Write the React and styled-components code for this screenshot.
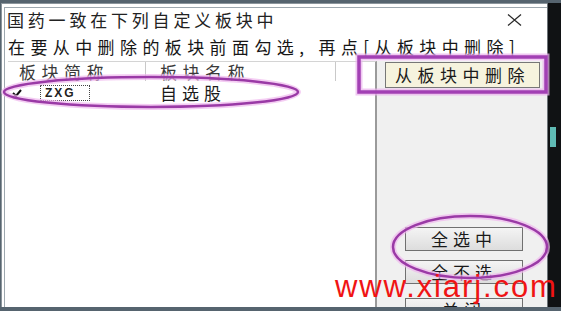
import styled, { createGlobalStyle } from "styled-components";

const GlobalStyle = createGlobalStyle`
  html, body {
    margin: 0;
    padding: 0;
    background: #56646f;
  }
`;

const cjk = `"Noto Sans CJK SC", "Noto Sans", sans-serif`;

const App = () => {
  return (
    <>
      <GlobalStyle />
      <Screen>
        <Main>
          <Dialog>
            <Inner>
              <TitleRow>
                <Title>国药一致在下列自定义板块中</Title>
                <Close aria-label="close">
                  <svg width="15" height="12" viewBox="0 0 15 12">
                    <path d="M1 0.5 L14 11.5 M14 0.5 L1 11.5" stroke="#2a2a2a" strokeWidth="1.3" fill="none" />
                  </svg>
                </Close>
              </TitleRow>
              <Hint>在要从中删除的板块前面勾选, 再点[从板块中删除]</Hint>
              <Content>
                <List>
                  <HeaderRow>
                    <HeaderCell $w={138} $pad={11}>板块简称</HeaderCell>
                    <HeaderCell $w={190} $pad={14}>板块名称</HeaderCell>
                    <HeaderCell $w={38} $pad={0} $last />
                  </HeaderRow>
                  <Row>
                    <CodeCell>
                      <Check>
                        <svg width="10" height="8" viewBox="0 0 10 8">
                          <path d="M1 4 L4 7 L9 1" stroke="#111" strokeWidth="2" fill="none" />
                        </svg>
                      </Check>
                      <Focus>ZXG</Focus>
                    </CodeCell>
                    <NameCell>自选股</NameCell>
                  </Row>
                </List>
                <Side>
                  <DeleteButton>从板块中删除</DeleteButton>
                  <ButtonGroup>
                    <Button>全选中</Button>
                    <Button>全不选</Button>
                    <Button $gap={14}>关闭</Button>
                  </ButtonGroup>
                </Side>
              </Content>
            </Inner>
          </Dialog>
          <DarkSide>
            <Teal />
          </DarkSide>
        </Main>

        <Marks width="561" height="311" viewBox="0 0 561 311">
          <g fill="none">
            <ellipse cx="151" cy="92" rx="147" ry="15" stroke="#f0b8ee" strokeWidth="6" opacity="0.7" />
            <ellipse cx="151" cy="92" rx="147" ry="15" stroke="#9a3aa6" strokeWidth="2.5" />
            <rect x="359" y="57" width="187" height="35" stroke="#eab0ec" strokeWidth="7" opacity="0.7" />
            <rect x="359" y="57" width="187" height="35" stroke="#a240b4" strokeWidth="3.5" />
            <ellipse cx="470" cy="247" rx="77" ry="31" stroke="#f0b8ee" strokeWidth="6" opacity="0.7" />
            <ellipse cx="470" cy="247" rx="77" ry="31" stroke="#9a3aa6" strokeWidth="2.5" />
          </g>
        </Marks>
        <Watermark>www.xiarj.com</Watermark>
      </Screen>
    </>
  );
};

export default App;

// Styled Components
const Screen = styled.div`
  position: relative;
  width: 561px;
  height: 311px;
  overflow: hidden;
  background: #56646f;
  padding: 3px 0 4px 1px;
  box-sizing: border-box;
`;

const Main = styled.div`
  display: flex;
  height: 100%;
`;

const Dialog = styled.div`
  width: 546px;
  background: #ffffff;
  border-left: 1px solid #8b959c;
  border-top: 1px solid #8b959c;
  padding: 3px 0 0 2px;
  box-sizing: border-box;
  display: flex;
`;

const Inner = styled.div`
  flex: 1;
  border-left: 1px solid #9ea8af;
  border-top: 1px solid #9ea8af;
  display: flex;
  flex-direction: column;
  min-width: 0;
`;

const TitleRow = styled.div`
  display: flex;
  align-items: center;
  height: 22px;
  padding-left: 2px;
`;

const Title = styled.div`
  font-family: ${cjk};
  font-size: 17px;
  letter-spacing: 3.8px;
  color: #222;
  white-space: nowrap;
`;

const Close = styled.div`
  margin-left: auto;
  margin-right: 25px;
  display: flex;
  padding-top: 2px;
`;

const Hint = styled.div`
  font-family: ${cjk};
  font-size: 17px;
  letter-spacing: 5.4px;
  color: #161616;
  height: 28px;
  line-height: 28px;
  margin-top: 3px;
  padding-left: 3px;
  white-space: nowrap;
`;

const Content = styled.div`
  flex: 1;
  display: flex;
  min-height: 0;
`;

const List = styled.div`
  width: 369px;
  margin-left: 3px;
  background: #ffffff;
  border-top: 1px solid #d4d4d4;
  border-right: 2px solid #9a9a9a;
  box-sizing: border-box;
`;

const HeaderRow = styled.div`
  display: flex;
  height: 19px;
`;

const HeaderCell = styled.div`
  width: ${(p) => p.$w}px;
  padding-left: ${(p) => p.$pad}px;
  box-sizing: border-box;
  border-right: ${(p) => (p.$last ? "none" : "1px solid #c9c9c9")};
  font-family: ${cjk};
  font-size: 17px;
  letter-spacing: 5.5px;
  line-height: 19px;
  color: #3a3a3a;
  white-space: nowrap;
`;

const Row = styled.div`
  display: flex;
  align-items: center;
  height: 21px;
  margin-top: 1px;
`;

const CodeCell = styled.div`
  width: 138px;
  display: flex;
  align-items: center;
  padding-left: 3px;
  box-sizing: border-box;
`;

const Check = styled.div`
  width: 11px;
  height: 11px;
  display: flex;
  align-items: center;
  justify-content: center;
`;

const Focus = styled.div`
  margin-left: 18px;
  width: 50px;
  height: 16px;
  border: 1px dotted #444;
  box-sizing: border-box;
  padding-left: 4px;
  font-family: "Liberation Sans", Arial, sans-serif;
  font-weight: bold;
  font-size: 12px;
  letter-spacing: 2px;
  line-height: 14px;
  color: #222;
`;

const NameCell = styled.div`
  padding-left: 14px;
  font-family: ${cjk};
  font-size: 17px;
  letter-spacing: 5px;
  color: #1a1a1a;
`;

const Side = styled.div`
  flex: 1;
  background: #f0f0f0;
  display: flex;
  flex-direction: column;
  padding-top: 1px;
  overflow: hidden;
`;

const DeleteButton = styled.div`
  margin-left: 8px;
  width: 155px;
  height: 26px;
  box-sizing: border-box;
  border: 1px solid #777;
  background: #f6f3de;
  font-family: ${cjk};
  font-size: 17px;
  letter-spacing: 5.5px;
  line-height: 24px;
  text-align: center;
  color: #1a1a1a;
  white-space: nowrap;
`;

const ButtonGroup = styled.div`
  margin-top: 139px;
  margin-left: 28px;
  display: flex;
  flex-direction: column;
  gap: 9px;
`;

const Button = styled.div`
  width: 118px;
  height: 24px;
  margin-top: ${(p) => (p.$gap ? p.$gap - 9 : 0)}px;
  box-sizing: border-box;
  border: 1px solid #707070;
  background: linear-gradient(#f4f4f4, #dddddd);
  font-family: ${cjk};
  font-size: 17px;
  letter-spacing: 5px;
  line-height: 22px;
  text-align: center;
  color: #1a1a1a;
`;

const DarkSide = styled.div`
  flex: 1;
  background: #101214;
  border-left: 1px solid #6c7378;
  position: relative;
  padding-top: 124px;
`;

const Teal = styled.div`
  width: 6px;
  height: 20px;
  margin-left: 2px;
  background: #5fbab4;
`;

const Marks = styled.svg`
  position: absolute;
  left: 0;
  top: 0;
  pointer-events: none;
`;

const Watermark = styled.div`
  position: absolute;
  left: 335px;
  top: 271px;
  font-family: "Liberation Sans", Arial, sans-serif;
  font-size: 31px;
  line-height: 31px;
  letter-spacing: 1.9px;
  color: #f01414;
  white-space: nowrap;
`;
